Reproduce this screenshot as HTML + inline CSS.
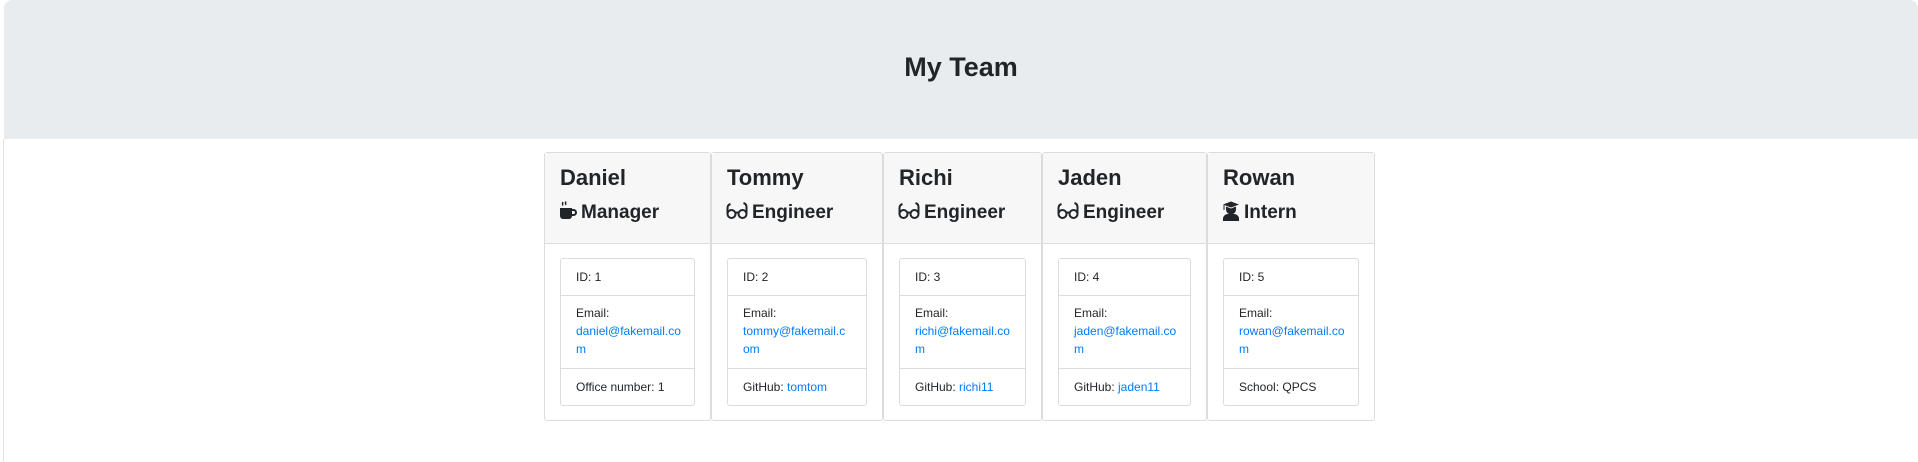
<!DOCTYPE html>
<html><head><style>
body{margin:0;width:1918px;height:462px;background:#fff;font-family:"Liberation Sans",sans-serif;color:#212529;position:relative;overflow:hidden}
.jumbo{position:absolute;left:4px;top:0;width:1914px;height:139px;background:#e9ecef;border-radius:8px 8px 0 0}
.jumbo h1{position:absolute;left:0;right:0;top:51px;margin:0;text-align:center;font-size:27px;font-weight:700;line-height:32px}
.edge{position:absolute;left:3px;top:139px;width:1px;height:323px;background:#e5e5e5}
.card{position:absolute;top:152px;height:269px;border:1px solid #dcdcdc;border-radius:3px;box-sizing:border-box;background:#fff}
.hd{height:90px;background:#f7f7f7;border-bottom:1px solid #dcdcdc;padding:0 0 0 15px;position:relative}
.nm{position:absolute;top:10px;left:15px;font-size:22px;font-weight:700;line-height:30px}
.rl{position:absolute;top:47px;left:14px;font-size:19px;font-weight:700;line-height:26px;white-space:nowrap}
.rl svg{vertical-align:-3px;margin-right:4px}
.lg{position:absolute;left:15px;right:15px;top:105px;height:148px;border:1px solid #dcdcdc;border-radius:3px;box-sizing:border-box;font-size:12px}
.it{padding:0 0 0 15px;white-space:nowrap;box-sizing:border-box}
.i1{height:37px;line-height:36px;border-bottom:1px solid #dcdcdc}
.i2{height:73px;border-bottom:1px solid #dcdcdc;padding-top:8px;line-height:18px}
.i3{height:36px;line-height:36px}
a{color:#007bff;text-decoration:none}
</style></head><body>
<div class="jumbo"><h1>My Team</h1></div>
<div class="edge"></div>

<div class="card" style="left:544px;width:167px">
<div class="hd"><div class="nm">Daniel</div><div class="rl"><svg width="18" height="20" viewBox="0 0 18 20"><path d="M4 1q-1 2 0 3.5M7 0.5q-1 2 0 3.5" stroke="#212529" stroke-width="1.4" fill="none"/><path d="M1 7h12v8a3 3 0 0 1-3 3H4a3 3 0 0 1-3-3z" fill="#212529"/><path d="M13 9h1.5a2.5 2.5 0 0 1 0 5H13" stroke="#212529" stroke-width="2" fill="none"/></svg>Manager</div></div>
<div class="lg"><div class="it i1">ID: 1</div><div class="it i2">Email:<br><a>daniel@fakemail.co<br>m</a></div><div class="it i3">Office number: 1</div></div>
</div>

<div class="card" style="left:711px;width:172px">
<div class="hd"><div class="nm">Tommy</div><div class="rl"><svg width="22" height="20" viewBox="0 0 22 20"><circle cx="5.5" cy="13" r="4" stroke="#212529" stroke-width="2" fill="none"/><circle cx="16.5" cy="13" r="4" stroke="#212529" stroke-width="2" fill="none"/><path d="M1.5 13V7q0-3 3-4M20.5 13V6q0-3-3-4M9.5 12q1.5-1 3 0" stroke="#212529" stroke-width="2" fill="none"/></svg>Engineer</div></div>
<div class="lg"><div class="it i1">ID: 2</div><div class="it i2">Email:<br><a>tommy@fakemail.c<br>om</a></div><div class="it i3">GitHub: <a>tomtom</a></div></div>
</div>

<div class="card" style="left:883px;width:159px">
<div class="hd"><div class="nm">Richi</div><div class="rl"><svg width="22" height="20" viewBox="0 0 22 20"><circle cx="5.5" cy="13" r="4" stroke="#212529" stroke-width="2" fill="none"/><circle cx="16.5" cy="13" r="4" stroke="#212529" stroke-width="2" fill="none"/><path d="M1.5 13V7q0-3 3-4M20.5 13V6q0-3-3-4M9.5 12q1.5-1 3 0" stroke="#212529" stroke-width="2" fill="none"/></svg>Engineer</div></div>
<div class="lg"><div class="it i1">ID: 3</div><div class="it i2">Email:<br><a>richi@fakemail.co<br>m</a></div><div class="it i3">GitHub: <a>richi11</a></div></div>
</div>

<div class="card" style="left:1042px;width:165px">
<div class="hd"><div class="nm">Jaden</div><div class="rl"><svg width="22" height="20" viewBox="0 0 22 20"><circle cx="5.5" cy="13" r="4" stroke="#212529" stroke-width="2" fill="none"/><circle cx="16.5" cy="13" r="4" stroke="#212529" stroke-width="2" fill="none"/><path d="M1.5 13V7q0-3 3-4M20.5 13V6q0-3-3-4M9.5 12q1.5-1 3 0" stroke="#212529" stroke-width="2" fill="none"/></svg>Engineer</div></div>
<div class="lg"><div class="it i1">ID: 4</div><div class="it i2">Email:<br><a>jaden@fakemail.co<br>m</a></div><div class="it i3">GitHub: <a>jaden11</a></div></div>
</div>

<div class="card" style="left:1207px;width:168px">
<div class="hd"><div class="nm">Rowan</div><div class="rl"><svg width="18" height="20" viewBox="0 0 18 20"><path d="M1 3.5L9 0.5l8 3-8 3z" fill="#212529"/><path d="M4 5.5v3a5 5 0 0 0 10 0v-3L9 7.5z" fill="#212529"/><path d="M1 20v-3a5 5 0 0 1 5-4h6a5 5 0 0 1 5 4v3z" fill="#212529"/><path d="M2 4v5" stroke="#212529" stroke-width="1"/></svg>Intern</div></div>
<div class="lg"><div class="it i1">ID: 5</div><div class="it i2">Email:<br><a>rowan@fakemail.co<br>m</a></div><div class="it i3">School: QPCS</div></div>
</div>
</body></html>
